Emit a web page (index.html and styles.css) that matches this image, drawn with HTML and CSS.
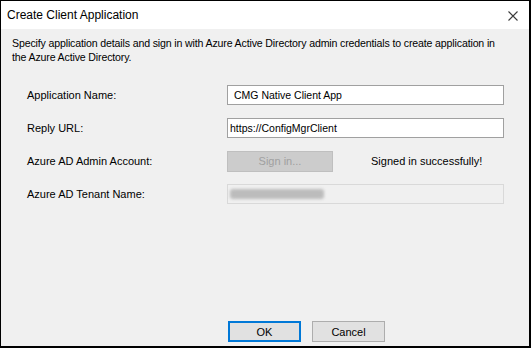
FILE: index.html
```html
<!DOCTYPE html>
<html lang="en">
<head>
    <meta charset="UTF-8">
    <title>Create Client Application</title>
    <link rel="stylesheet" href="styles.css">
</head>
<body>
    <div class="dialog">
        <div class="title-bar">
            <span class="title">Create Client Application</span>
            <svg class="close" width="10" height="10" viewBox="0 0 10 10">
                <path d="M0.5 0.5 L9.5 9.5 M9.5 0.5 L0.5 9.5" stroke="#3c3c3c" stroke-width="1.1" fill="none"/>
            </svg>
        </div>

        <div class="content">
            <p class="description">Specify application details and sign in with Azure Active Directory admin credentials to create application in the Azure Active Directory.</p>

            <div class="form">
                <label class="label">Application Name:</label>
                <div class="field">
                    <div class="textbox">CMG Native Client App</div>
                </div>

                <label class="label">Reply URL:</label>
                <div class="field">
                    <div class="textbox url">https://ConfigMgrClient</div>
                </div>

                <label class="label">Azure AD Admin Account:</label>
                <div class="field field-row">
                    <button class="btn btn-disabled">Sign in...</button>
                    <span class="status">Signed in successfully!</span>
                </div>

                <label class="label">Azure AD Tenant Name:</label>
                <div class="field">
                    <div class="textbox textbox-disabled">
                        <span class="redacted"></span>
                    </div>
                </div>
            </div>

            <div class="footer">
                <button class="btn btn-default">OK</button>
                <button class="btn">Cancel</button>
            </div>
        </div>
    </div>
</body>
</html>
```

FILE: styles.css
```css
* {
    margin: 0;
    padding: 0;
    box-sizing: border-box;
}

html, body {
    width: 531px;
    height: 348px;
    overflow: hidden;
}

body {
    background: #f0f0f0;
    font-family: "Liberation Sans", Arial, sans-serif;
    font-size: 11px;
    color: #000;
}


.dialog {
    width: 531px;
    height: 348px;
    display: flex;
    flex-direction: column;
    border: 1px solid #000;
    border-bottom-width: 2px;
    border-right-width: 2px;
    background: #f0f0f0;
}

.title-bar {
    height: 28px;
    background: #fff;
    display: flex;
    align-items: center;
    justify-content: space-between;
    padding: 0 11px 1px 6px;
}

.title {
    font-size: 12px;
}

.close {
    display: block;
    margin-top: 2px;
}


.content {
    flex: 1;
    display: flex;
    flex-direction: column;
    padding: 7px 0 4px 11px;
}

.description {
    line-height: 14px;
    font-size: 10.6px;
    letter-spacing: -0.15px;
    padding-right: 25px;
}


.form {
    display: grid;
    grid-template-columns: 200px 277px;
    grid-auto-rows: 20px;
    row-gap: 13px;
    align-items: center;
    margin-top: 21px;
    padding-left: 15px;
}

.label {
    display: block;
}

.field {
    height: 20px;
}

.field-row {
    display: flex;
    align-items: center;
    gap: 38px;
}


.textbox {
    height: 20px;
    border: 1px solid #a0a0a0;
    background: #fff;
    padding: 0 6px;
    line-height: 18px;
    font-size: 10.5px;
}

.textbox.url {
    padding-left: 2px;
}

.textbox-disabled {
    background: #f0f0f0;
    border-color: #d9d9d9;
    display: flex;
    align-items: center;
}

.redacted {
    display: block;
    width: 94px;
    height: 10px;
    margin-left: -4px;
    background: #bcbcbc;
    border-radius: 3px;
    filter: blur(1.5px);
}


.btn {
    height: 21px;
    width: 73px;
    border: 1px solid #adadad;
    background: #e1e1e1;
    font-family: "Liberation Sans", Arial, sans-serif;
    font-size: 11px;
    color: #000;
}

.btn-disabled {
    width: 106px;
    background: #cccccc;
    border-color: #bfbfbf;
    color: #a0a0a0;
}

.status {
    white-space: nowrap;
}

.btn-default {
    border: 2px solid #0078d7;
}


.footer {
    margin-top: auto;
    display: flex;
    gap: 11px;
    padding-left: 216px;
}
```
